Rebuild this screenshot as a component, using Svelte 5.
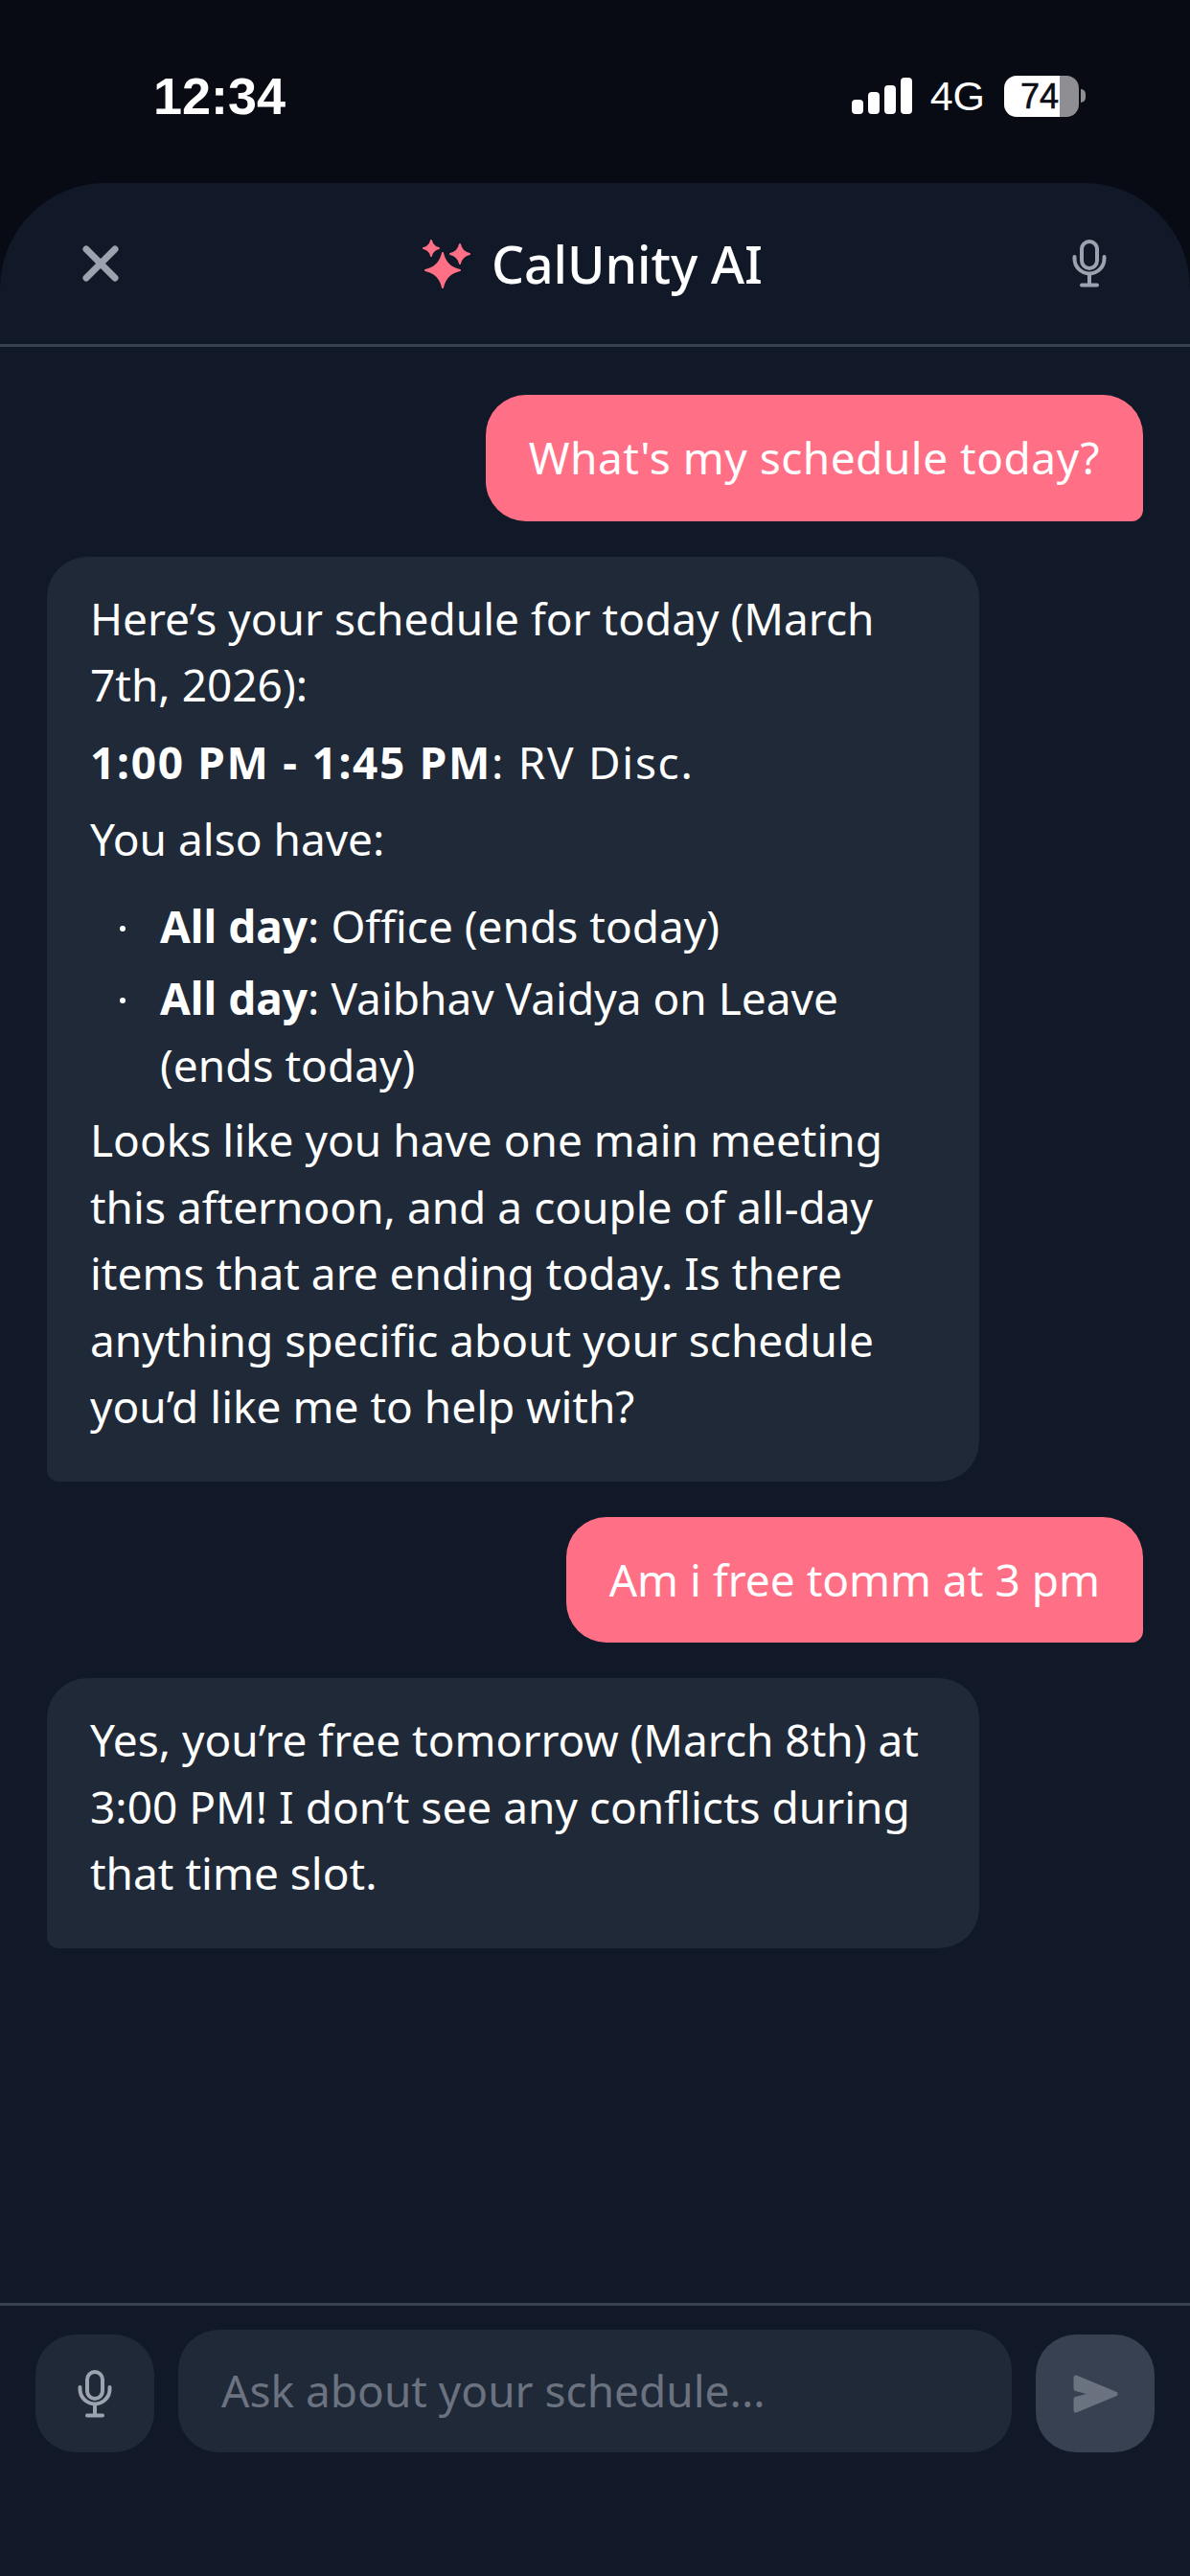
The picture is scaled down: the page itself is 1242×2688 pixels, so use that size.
<script>
  // chat transcript for the assistant sheet
  const scheduleItems = [
    { label: 'All day', text: 'Office (ends today)' },
    { label: 'All day', text: 'Vaibhav Vaidya on Leave (ends today)' }
  ];
</script>

{#snippet micIcon()}
  <svg viewBox="0 0 36 50" width="36" height="50" fill="none" stroke="currentColor" stroke-width="4" stroke-linecap="round">
    <rect x="10" y="2" width="16" height="28" rx="8" />
    <path d="M2.5 18v2a15.5 15.5 0 0 0 31 0v-2" />
    <path d="M18 37v10" />
    <path d="M10 47.5h16" />
  </svg>
{/snippet}

<div class="screen">
  <header class="status">
    <span class="time">12:34</span>
    <div class="status-right">
      <div class="signal">
        <i style="height: 15px"></i>
        <i style="height: 23px"></i>
        <i style="height: 30px"></i>
        <i style="height: 38px"></i>
      </div>
      <span class="net">4G</span>
      <div class="battery">
        <div class="battery-body"><span>74</span></div>
        <div class="battery-cap"></div>
      </div>
    </div>
  </header>

  <section class="sheet">
    <div class="topbar">
      <svg class="close" viewBox="0 0 38 38" width="38" height="38" fill="none" stroke="#9ca3af" stroke-width="7" stroke-linecap="round">
        <path d="M4 4l30 30M34 4L4 34" />
      </svg>
      <div class="title">
        <svg viewBox="442 250 52 51" width="52" height="51" fill="#ff7086" stroke="#ff7086" stroke-width="2" stroke-linejoin="round">
          <path transform="translate(463 282)" d="M0 -18Q3.2 -3.2 18 0Q3.2 3.2 0 18Q-3.2 3.2 -18 0Q-3.2 -3.2 0 -18Z" />
          <path transform="translate(481 265)" d="M0 -10Q1.8 -1.8 10 0Q1.8 1.8 0 10Q-1.8 1.8 -10 0Q-1.8 -1.8 0 -10Z" />
          <path transform="translate(451 259)" d="M0 -8Q1.4 -1.4 8 0Q1.4 1.4 0 8Q-1.4 1.4 -8 0Q-1.4 -1.4 0 -8Z" />
        </svg>
        <span>CalUnity AI</span>
      </div>
      <span class="top-mic">{@render micIcon()}</span>
    </div>

    <main class="messages">
      <div class="bubble user first">What's my schedule today?</div>

      <div class="bubble ai">
        <p>Here’s your schedule for today (March 7th, 2026):</p>
        <p class="gap wide"><strong>1:00 PM - 1:45 PM</strong>: RV Disc.</p>
        <p class="gap">You also have:</p>
        <ul>
          {#each scheduleItems as item}
            <li><strong>{item.label}</strong>: {item.text}</li>
          {/each}
        </ul>
        <p>Looks like you have one main meeting this afternoon, and a couple of all-day items that are ending today. Is there anything specific about your schedule you’d like me to help with?</p>
      </div>

      <div class="bubble user">Am i free tomm at 3 pm</div>

      <div class="bubble ai">
        <p>Yes, you’re free tomorrow (March 8th) at 3:00 PM! I don’t see any conflicts during that time slot.</p>
      </div>
    </main>

    <footer class="composer">
      <button class="icon-btn mic">{@render micIcon()}</button>
      <div class="input">Ask about your schedule...</div>
      <button class="icon-btn send" aria-label="Send">
        <svg viewBox="0 0 47 40" width="47" height="40" fill="#6b7280" stroke="#6b7280" stroke-width="5" stroke-linejoin="round">
          <path d="M3 3L44 20L3 37V25.5L24 20L3 14.5Z" />
        </svg>
      </button>
    </footer>
  </section>
</div>

<style>
  :global(body) {
    margin: 0;
    background: #080b14;
  }

  .screen {
    width: 1242px;
    height: 2688px;
    display: flex;
    flex-direction: column;
    background: #080b14;
    font-family: "Noto Sans", sans-serif;
    color: #fff;
    overflow: hidden;
  }

  .status {
    height: 191px;
    flex: none;
    display: flex;
    justify-content: space-between;
    align-items: flex-start;
    box-sizing: border-box;
    padding: 70px 109px 0 160px;
    font-family: "Liberation Sans", sans-serif;
  }

  .time {
    font-size: 54px;
    line-height: 60px;
    font-weight: 700;
  }

  .status-right {
    display: flex;
    align-items: center;
    height: 60px;
  }

  .signal {
    display: flex;
    align-items: flex-end;
    gap: 5px;
    margin-right: 19px;
  }

  .signal i {
    width: 12px;
    background: #fff;
    border-radius: 4px;
  }

  .net {
    font-size: 43px;
    margin-right: 20px;
  }

  .battery {
    display: flex;
    align-items: center;
    gap: 2px;
  }

  .battery-body {
    width: 78px;
    height: 43px;
    border-radius: 13px;
    background: linear-gradient(90deg, #fff 0 74%, #8e8e93 74%);
    color: #0b0e16;
    font-size: 36px;
    line-height: 43px;
    box-sizing: border-box;
    padding-left: 17px;
    -webkit-text-stroke: 0.6px #0b0e16;
  }

  .battery-cap {
    width: 5px;
    height: 14px;
    background: #8e8e93;
    border-radius: 0 6px 6px 0;
  }

  .sheet {
    flex: 1;
    display: flex;
    flex-direction: column;
    min-height: 0;
    background: #111827;
    border-radius: 110px 110px 0 0;
  }

  .topbar {
    height: 171px;
    flex: none;
    box-sizing: border-box;
    border-bottom: 3px solid #374151;
    display: flex;
    align-items: center;
    justify-content: space-between;
    padding: 0 87px 0 86px;
  }

  .title {
    display: flex;
    align-items: center;
    gap: 20px;
    font-size: 53.5px;
    font-weight: 500;
    margin-right: 6px;
  }

  .top-mic {
    display: flex;
    color: #9ca3af;
  }

  .messages {
    flex: 1;
    min-height: 0;
    display: flex;
    flex-direction: column;
    gap: 37px;
    padding: 50px 49px 0 49px;
  }

  .bubble {
    box-sizing: border-box;
    font-size: 46px;
    line-height: 69.5px;
    padding: 31px 45px;
  }

  .user {
    align-self: flex-end;
    background: #ff7086;
    border-radius: 42px 42px 12px 42px;
  }

  /* the first question sets slightly wider */
  .first {
    letter-spacing: 0.5px;
  }

  .ai {
    align-self: flex-start;
    width: 973px;
    background: #1f2937;
    border-radius: 42px 42px 42px 12px;
    padding: 30px 45px 43px;
  }

  p {
    margin: 0;
  }

  .gap {
    margin-top: 11px;
  }

  .wide {
    letter-spacing: 1.7px;
  }

  strong {
    font-weight: 700;
  }

  ul {
    margin: 21px 0 9px;
    padding: 0 0 0 73px;
    list-style: none;
    display: flex;
    flex-direction: column;
    gap: 6px;
  }

  li {
    position: relative;
  }

  li::before {
    content: "";
    position: absolute;
    left: -42px;
    top: 34px;
    width: 6px;
    height: 6px;
    border-radius: 50%;
    background: #fff;
  }

  .composer {
    flex: none;
    height: 285px;
    box-sizing: border-box;
    border-top: 3px solid #374151;
    display: flex;
    align-items: flex-start;
    gap: 25px;
    padding: 25px 37px 0 37px;
  }

  .icon-btn {
    width: 124px;
    height: 123px;
    margin-top: 5px;
    border: none;
    padding: 0;
    border-radius: 42px;
    display: flex;
    align-items: center;
    justify-content: center;
    flex: none;
  }

  .mic {
    background: #1f2937;
    color: #9ca3af;
  }

  .send {
    background: #374151;
  }

  .input {
    flex: 1;
    height: 128px;
    box-sizing: border-box;
    background: #1f2937;
    border-radius: 42px;
    padding: 0 45px 2px;
    display: flex;
    align-items: center;
    font-size: 46px;
    color: #6b7280;
  }
</style>
